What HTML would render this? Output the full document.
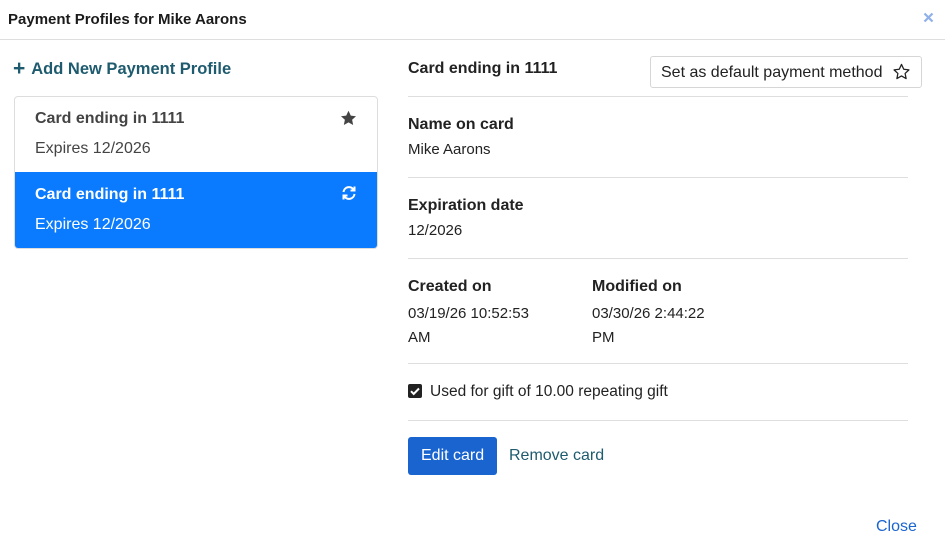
<!DOCTYPE html>
<html><head><style>
*{margin:0;padding:0;box-sizing:border-box}
body{width:945px;height:560px;background:#fff;font-family:"Liberation Sans",sans-serif;color:#222;position:relative;overflow:hidden}
.a{position:absolute;white-space:nowrap}
.b{font-weight:bold}
.hr{position:absolute;height:1px;background:#dedede}
</style></head><body>
<div class="a b" style="left:8px;top:11px;font-size:15px;color:#1b1b1b">Payment Profiles for Mike Aarons</div>
<svg class="a" style="left:923px;top:12px" width="11" height="11" viewBox="0 0 11 11"><path d="M1.5 1.5L9.5 9.5M9.5 1.5L1.5 9.5" stroke="#8fb0e8" stroke-width="2.2"/></svg>
<div class="hr" style="left:0;top:39px;width:945px"></div>

<div class="a b" style="left:13px;top:56px;font-size:16.5px;color:#1e5b6e"><span style="font-size:21px;position:relative;top:1px;margin-right:6px">+</span>Add New Payment Profile</div>

<div class="a" style="left:14px;top:96px;width:364px;height:153px;border:1px solid #ddd;border-radius:4px;overflow:hidden">
 <div class="a b" style="left:20px;top:13px;font-size:16px;color:#444">Card ending in 1111</div>
 <svg class="a" style="left:325px;top:13px" width="17" height="16" viewBox="0 0 24 23"><path d="M12 1l3.3 7 7.5.9-5.6 5.1 1.5 7.5L12 17.7 5.3 21.5l1.5-7.5L1.2 8.9 8.7 8z" fill="#444"/></svg>
 <div class="a" style="left:20px;top:43px;font-size:16px;color:#444">Expires 12/2026</div>
 <div class="a" style="left:0;top:75px;width:364px;height:78px;background:#0a7bff">
  <div class="a b" style="left:20px;top:14px;font-size:16px;color:#fff">Card ending in 1111</div>
  <svg class="a" style="left:326px;top:13px" width="16" height="16" viewBox="0 0 16 16" fill="none" stroke="#fff" stroke-width="2"><path d="M2.5 7A5.5 5.5 0 0 1 12.5 4.5"/><path d="M13.5 9A5.5 5.5 0 0 1 3.5 11.5"/><path d="M13.5 1.5v4h-4" /><path d="M2.5 14.5v-4h4"/></svg>
  <div class="a" style="left:20px;top:44px;font-size:16px;color:#fff">Expires 12/2026</div>
 </div>
</div>

<div class="a b" style="left:408px;top:60px;font-size:16px">Card ending in 1111</div>
<div class="a" style="left:650px;top:56px;width:272px;height:32px;border:1px solid #d6d6d6;border-radius:3px;font-size:16px;padding:7px 0 0 10px;color:#222">Set as default payment method</div>
<svg class="a" style="left:893px;top:63px" width="17" height="17" viewBox="0 0 24 23"><path d="M12 1.5l3.2 6.8 7.3.9-5.4 5 1.4 7.3L12 17.8l-6.5 3.7 1.4-7.3-5.4-5 7.3-.9z" fill="none" stroke="#222" stroke-width="1.8" stroke-linejoin="round"/></svg>
<div class="hr" style="left:408px;top:96px;width:500px"></div>

<div class="a b" style="left:408px;top:116px;font-size:16px">Name on card</div>
<div class="a" style="left:408px;top:141px;font-size:15px">Mike Aarons</div>
<div class="hr" style="left:408px;top:177px;width:500px"></div>

<div class="a b" style="left:408px;top:197px;font-size:16px">Expiration date</div>
<div class="a" style="left:408px;top:222px;font-size:15px">12/2026</div>
<div class="hr" style="left:408px;top:258px;width:500px"></div>

<div class="a b" style="left:408px;top:278px;font-size:16px">Created on</div>
<div class="a" style="left:408px;top:302px;font-size:15px;line-height:24px">03/19/26 10:52:53<br>AM</div>
<div class="a b" style="left:592px;top:278px;font-size:16px">Modified on</div>
<div class="a" style="left:592px;top:302px;font-size:15px;line-height:24px">03/30/26 2:44:22<br>PM</div>
<div class="hr" style="left:408px;top:363px;width:500px"></div>

<div class="a" style="left:408px;top:384px;width:14px;height:14px;background:#222;border-radius:2px"></div>
<svg class="a" style="left:408px;top:384px" width="14" height="14" viewBox="0 0 14 14"><path d="M3 7.2l2.7 2.7L11 4.5" stroke="#fff" stroke-width="2" fill="none"/></svg>
<div class="a" style="left:430px;top:383px;font-size:15.5px">Used for gift of 10.00 repeating gift</div>
<div class="hr" style="left:408px;top:420px;width:500px"></div>

<div class="a" style="left:408px;top:437px;width:89px;height:38px;background:#1a64cf;border-radius:3px;color:#fff;font-size:16px;padding:10px 0 0 13px">Edit card</div>
<div class="a" style="left:509px;top:447px;font-size:16px;color:#1e5b6e">Remove card</div>
<div class="a" style="left:876px;top:518px;font-size:16px;color:#1a64cf">Close</div>
</body></html>
